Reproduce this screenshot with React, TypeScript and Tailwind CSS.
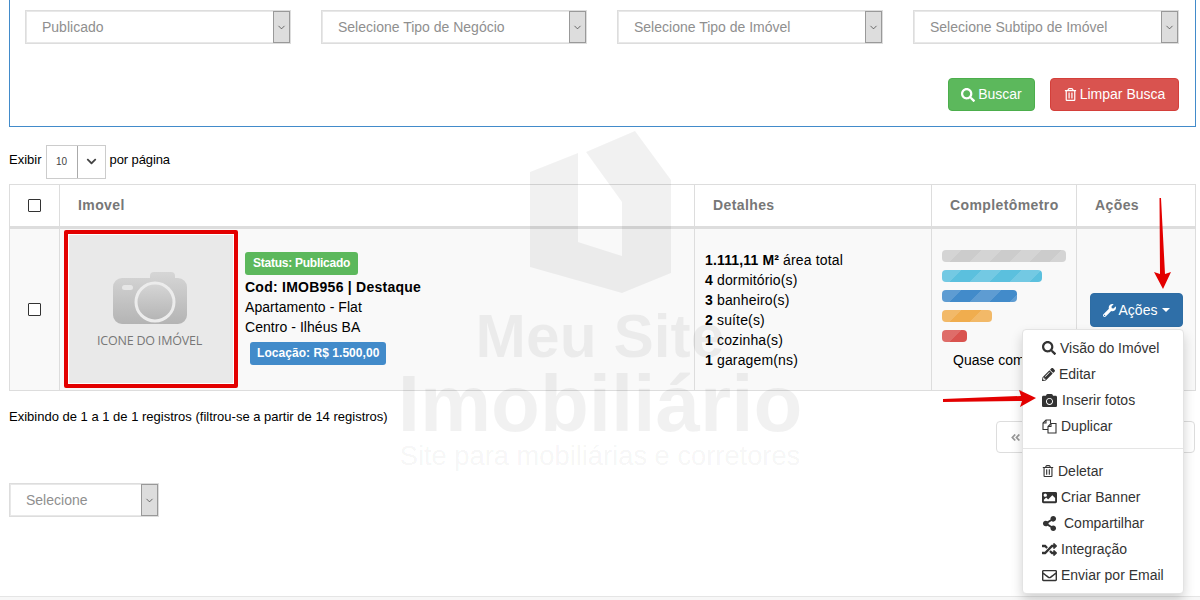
import {
  FaAngleDoubleLeft,
  FaCamera,
  FaChevronDown,
  FaImage,
  FaPencilAlt,
  FaRandom,
  FaRegEnvelope,
  FaRegTrashAlt,
  FaSearch,
  FaShareAlt,
  FaWrench,
} from 'react-icons/fa';
import { ChevronDown } from 'lucide-react';

function FakeSelect({ label, width }: { label: string; width: string }) {
  return (
    <div className={`${width} h-[34px] flex items-center justify-between bg-white border border-[#ddd] shadow-[inset_0_0_0_1px_#e8e8e8]`}>
      <span className="pl-[16px] text-[14px] text-[#8f8f8f]">{label}</span>
      <span className="w-[17px] h-[32px] flex items-center justify-center bg-[#ddd] border border-[#999]">
        <ChevronDown size={11} strokeWidth={1.5} className="text-[#333]" />
      </span>
    </div>
  );
}

function Bar({ width, color }: { width: string; color: string }) {
  return <div className={`${width} ${color} h-[12px] rounded-[4px] bg-[length:40px_40px] bg-[linear-gradient(135deg,rgba(255,255,255,.15)_25%,transparent_25%,transparent_50%,rgba(255,255,255,.15)_50%,rgba(255,255,255,.15)_75%,transparent_75%,transparent)]`} />;
}

function Check() {
  return <input type="checkbox" className="appearance-none w-[13px] h-[13px] border border-[#333] rounded-[1px] bg-white" />;
}

function FilesIcon() {
  return (
    <svg width="15" height="15" viewBox="0 0 15 15" fill="none" stroke="currentColor" strokeWidth="1.1">
      <path d="M6 10.5 H1 V4 L4 1 H8.5 V4.5" />
      <path d="M4 1 V4 H1" />
      <path d="M6 14 V7.5 L9 4.5 H14 V14 Z" fill="#fff" />
      <path d="M9 4.5 V7.5 H6" />
    </svg>
  );
}

const menuTop = [
  { icon: <FaSearch size={14} />, label: 'Visão do Imóvel', gap: 'gap-[4px]' },
  { icon: <FaPencilAlt size={13} />, label: 'Editar', gap: 'gap-[4px]' },
  { icon: <FaCamera size={15} />, label: 'Inserir fotos', gap: 'gap-[5px]' },
  { icon: <FilesIcon />, label: 'Duplicar', gap: 'gap-[4px]' },
];

const menuBottom = [
  { icon: <FaRegTrashAlt size={12} />, label: 'Deletar', gap: 'gap-[4px]' },
  { icon: <FaImage size={15} />, label: 'Criar Banner', gap: 'gap-[4px]' },
  { icon: <FaShareAlt size={15} />, label: 'Compartilhar', gap: 'gap-[7px]' },
  { icon: <FaRandom size={15} />, label: 'Integração', gap: 'gap-[4px]' },
  { icon: <FaRegEnvelope size={15} />, label: 'Enviar por Email', gap: 'gap-[4px]' },
];

function MenuRow({ icon, label, gap }: { icon: React.ReactNode; label: string; gap: string }) {
  return (
    <div className={`h-[26px] pl-[19px] flex items-center ${gap} text-[14px] text-[#333]`}>
      {icon}
      <span>{label}</span>
    </div>
  );
}

export default function App() {
  return (
    <div className="relative w-[1200px] h-[600px] overflow-hidden bg-white text-black font-['Liberation_Sans',Arial,sans-serif]">
      {/* filtros */}
      <div className="ml-[9px] w-[1187px] h-[127px] border border-t-0 border-[#428bca] pl-[15px] pr-[16px] pt-[10px]">
        <div className="flex gap-[30px]">
          <FakeSelect label="Publicado" width="w-[266px]" />
          <FakeSelect label="Selecione Tipo de Negócio" width="w-[266px]" />
          <FakeSelect label="Selecione Tipo de Imóvel" width="w-[266px]" />
          <FakeSelect label="Selecione Subtipo de Imóvel" width="w-[266px]" />
        </div>
        <div className="mt-[34px] flex justify-end gap-[15px]">
          <button className="w-[87px] h-[33px] flex items-center justify-center gap-[3px] bg-[#5cb85c] border border-[#4cae4c] rounded-[4px] text-white text-[14px]">
            <FaSearch size={14} /> Buscar
          </button>
          <button className="w-[129px] h-[33px] flex items-center justify-center gap-[3px] bg-[#d9534f] border border-[#d43f3a] rounded-[4px] text-white text-[14px]">
            <FaRegTrashAlt size={13} /> Limpar Busca
          </button>
        </div>
      </div>

      {/* exibir por pagina */}
      <div className="ml-[9px] mt-[18px] h-[33px] flex items-center text-[13px]">
        <span className="pb-[4px]">Exibir</span>
        <div className="ml-[4px] w-[60px] h-[34px] flex border border-[#ccc]">
          <span className="w-[31px] flex items-center justify-center text-[10px] text-[#444] border-r border-[#aaa]">10</span>
          <span className="flex-1 flex items-center justify-center text-[#444]">
            <FaChevronDown size={11} />
          </span>
        </div>
        <span className="ml-[4px] pb-[4px] tracking-[-0.1px]">por página</span>
      </div>

      {/* tabela */}
      <div className="ml-[9px] mt-[6px] w-[1187px] border border-[#ddd] grid grid-cols-[49px_635px_237px_145px_119px] text-[14px]">
        <div className="h-[44px] flex items-center justify-center border-b-[3px] border-[#ddd]"><Check /></div>
        <div className="h-[44px] flex items-center pl-[18px] border-l border-b-[3px] border-[#ddd] font-bold text-[#777] tracking-[0.4px]">Imovel</div>
        <div className="h-[44px] flex items-center pl-[18px] border-l border-b-[3px] border-[#ddd] font-bold text-[#777] tracking-[0.4px]">Detalhes</div>
        <div className="h-[44px] flex items-center pl-[18px] border-l border-b-[3px] border-[#ddd] font-bold text-[#777] tracking-[0.4px]">Completômetro</div>
        <div className="h-[44px] flex items-center pl-[18px] border-l border-b-[3px] border-[#ddd] font-bold text-[#777] tracking-[0.4px]">Ações</div>

        <div className="h-[161px] flex items-center justify-center bg-[#f9f9f9]"><Check /></div>
        <div className="h-[161px] flex items-center pl-[4px] border-l border-[#ddd] bg-[#f9f9f9]">
          <div className="self-start mt-[1px] w-[174px] h-[158px] border-[4px] border-[#e30000] rounded-[2px] p-[1px] bg-white">
            <div className="w-full h-full bg-[#e9e9e9] flex flex-col items-center pt-[35px]">
              <svg width="76" height="56" viewBox="0 0 76 56" className="-ml-[3px]">
                <defs>
                  <linearGradient id="cam" x1="0" y1="0" x2="0" y2="1">
                    <stop offset="0" stopColor="#d6d6d6" />
                    <stop offset="1" stopColor="#b4b4b4" />
                  </linearGradient>
                </defs>
                <path d="M38 6 a4 4 0 0 1 4-4 h17 a4 4 0 0 1 4 4 v2 h3 a9 9 0 0 1 9 9 v28 a9 9 0 0 1-9 9 H10 a9 9 0 0 1-9-9 V17 a9 9 0 0 1 9-9 h28 z" fill="url(#cam)" />
                <rect x="10" y="15" width="11" height="5" rx="2.5" fill="#e6e6e6" />
                <circle cx="43" cy="32" r="19" fill="url(#cam)" stroke="#ececec" strokeWidth="3" />
              </svg>
              <span className="mt-[6px] -ml-[3px] text-[12.5px] text-[#777] font-['Open_Sans',sans-serif] leading-[18px] tracking-[-0.2px]">ICONE DO IMÓVEL</span>
            </div>
          </div>
          <div className="ml-[7px] pb-[3px] flex flex-col items-start leading-[20px] tracking-[0.05px]">
            <span className="h-[23px] px-[8px] flex items-center bg-[#5cb85c] rounded-[3px] text-white text-[12px] font-bold mb-[2px] tracking-[-0.25px]">Status: Publicado</span>
            <span className="font-bold tracking-[0.25px]">Cod: IMOB956 | Destaque</span>
            <span>Apartamento - Flat</span>
            <span>Centro - Ilhéus BA</span>
            <span className="ml-[5px] mt-[5px] h-[23px] px-[7px] flex items-center bg-[#428bca] rounded-[3px] text-white text-[12px] font-bold">Locação: R$ 1.500,00</span>
          </div>
        </div>
        <div className="h-[161px] flex flex-col justify-center pl-[10px] border-l border-[#ddd] bg-[#f9f9f9] leading-[20px] tracking-[0.15px]">
          <span><b>1.111,11 M²</b> área total</span>
          <span><b>4</b> dormitório(s)</span>
          <span><b>3</b> banheiro(s)</span>
          <span><b>2</b> suíte(s)</span>
          <span><b>1</b> cozinha(s)</span>
          <span><b>1</b> garagem(ns)</span>
        </div>
        <div className="h-[161px] pl-[10px] pt-[21px] border-l border-[#ddd] bg-[#f9f9f9] flex flex-col gap-[8px]">
          <Bar width="w-[124px]" color="bg-[#ccc]" />
          <Bar width="w-[100px]" color="bg-[#5bc0de]" />
          <Bar width="w-[75px]" color="bg-[#428bca]" />
          <Bar width="w-[50px]" color="bg-[#f0ad4e]" />
          <Bar width="w-[25px]" color="bg-[#d9534f]" />
          <span className="pl-[11px] leading-[20px] whitespace-nowrap">Quase completo</span>
        </div>
        <div className="h-[161px] pl-[13px] pt-[64px] border-l border-[#ddd] bg-[#f9f9f9]">
          <button className="w-[93px] h-[34px] flex items-center justify-center gap-[3px] bg-[#2f6fa8] border border-[#2e6da4] rounded-[4px] text-white text-[14px]">
            <FaWrench size={13} /> Ações
            <span className="ml-[2px] w-0 h-0 border-x-[4px] border-x-transparent border-t-[4px] border-t-white" />
          </button>
        </div>
      </div>

      {/* rodape da tabela */}
      <div className="ml-[9px] mt-[18px] flex items-start justify-between w-[1186px]">
        <span className="text-[13px] leading-[16px]">Exibindo de 1 a 1 de 1 registros (filtrou-se a partir de 14 registros)</span>
        <div className="mt-[12px] w-[199px] h-[32px] pl-[13px] flex items-center gap-[3px] border border-[#ddd] rounded-[4px] text-[14px] text-[#999] bg-white">
          <FaAngleDoubleLeft size={11} /> Anterior
        </div>
      </div>
      <div className="ml-[9px] mt-[30px]">
        <FakeSelect label="Selecione" width="w-[150px]" />
      </div>

      <div className="absolute left-0 right-0 top-[596px] h-[4px] border-t border-[#e5e5e5] bg-[#f7f7f7]" />

      {/* marca d'agua */}
      <div className="absolute left-[400px] top-[131px] w-[400px] h-[340px] pointer-events-none text-[#000]/[0.055] flex flex-col items-center">
        <svg width="400" height="164" viewBox="400 131 400 164" className="shrink-0">
          <path fill="#000" fillOpacity="0.055" d="M530 172 L578 153 V242 L622 256 V202 L586 152 L635 131 L671 180 V273 L622 293 L530 267 Z" />
        </svg>
        <span className="mt-[8px] text-[60.5px] leading-[66px] font-bold whitespace-nowrap">Meu Site</span>
        <span className="mt-[-7px] text-[80px] leading-[84px] font-bold whitespace-nowrap">Imobiliário</span>
        <span className="mt-[-5px] text-[27.3px] leading-[30px] whitespace-nowrap">Site para mobiliárias e corretores</span>
      </div>

      {/* menu acoes */}
      <div className="absolute left-[1022px] top-[329px] w-[162px] h-[265px] py-[5px] bg-white border border-[#e3e3e3] rounded-[4px] shadow-[0_6px_12px_rgba(0,0,0,.175)]">
        {menuTop.map((m) => <MenuRow key={m.label} {...m} />)}
        <div className="my-[9px] h-px bg-[#e5e5e5]" />
        {menuBottom.map((m) => <MenuRow key={m.label} {...m} />)}
      </div>

      {/* setas */}
      <svg className="absolute left-0 top-0 pointer-events-none" width="1200" height="600" viewBox="0 0 1200 600">
        <path fill="#e30000" d="M1159.5 198 L1161 198 L1165 274 L1171 272 L1163 289 L1154 272 L1160 274 Z" />
        <path fill="#e30000" d="M943 399 L1021 396 L1019 390 L1036 398 L1020 407 L1022 401 L943 402 Z" />
      </svg>
    </div>
  );
}
